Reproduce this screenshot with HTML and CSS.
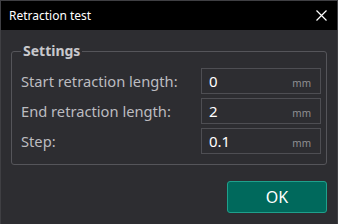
FILE: index.html
```html
<!DOCTYPE html>
<html>
<head>
<meta charset="utf-8">
<link rel="stylesheet" href="styles.css">
</head>
<body>
<div class="window">
  <div class="titlebar">
    <span class="title">Retraction test</span>
    <svg class="close" width="11" height="11" viewBox="0 0 11 11"><path d="M0.5 0.5 L10.5 10.5 M10.5 0.5 L0.5 10.5" stroke="#fff" stroke-width="1.2" fill="none"/></svg>
  </div>
  <div class="content">
    <fieldset class="group">
      <legend class="legend">Settings</legend>
      <div class="row">
        <span class="label">Start retraction length:</span>
        <div class="input"><span class="val">0</span><span class="unit">mm</span></div>
      </div>
      <div class="row">
        <span class="label">End retraction length:</span>
        <div class="input"><span class="val">2</span><span class="unit">mm</span></div>
      </div>
      <div class="row">
        <span class="label">Step:</span>
        <div class="input"><span class="val">0.1</span><span class="unit">mm</span></div>
      </div>
    </fieldset>
    <div class="footer">
      <button class="ok">OK</button>
    </div>
  </div>
</div>
</body>
</html>
```
FILE: styles.css
```css
html, body {
  margin: 0;
  padding: 0;
  background: #2d2d31;
}
.window {
  width: 338px;
  height: 224px;
  box-sizing: border-box;
  border: 1px solid #3f3f43;
  border-bottom: none;
  background: #2d2d31;
  font-family: "Noto Sans", "Open Sans", sans-serif;
  display: flex;
  flex-direction: column;
}
.titlebar {
  height: 29px;
  background: #000;
  display: flex;
  align-items: center;
  justify-content: space-between;
  padding: 0 10px 0 8px;
}
.title {
  color: #fff;
  font-size: 12px;
}
.close {
  display: block;
}
.content {
  flex: 1;
  padding: 13px 10px 0 10px;
  display: flex;
  flex-direction: column;
}
.group {
  margin: 0;
  border: 1px solid #55555a;
  border-radius: 3px;
  padding: 9px 5px 10px 9px;
  display: flex;
  flex-direction: column;
  gap: 4px;
}
.legend {
  color: #c8c8cc;
  font-weight: bold;
  font-size: 14px;
  padding: 0 2px;
  margin-left: 0;
  line-height: 16px;
}
.row {
  display: flex;
  align-items: center;
  justify-content: space-between;
  height: 26px;
}
.label {
  color: #bcbcc0;
  font-size: 14.7px;
}
.input {
  width: 120px;
  height: 26px;
  box-sizing: border-box;
  border: 1px solid #4e4e53;
  display: flex;
  align-items: center;
  justify-content: space-between;
  padding: 0 9px 0 7px;
}
.val {
  color: #ffffff;
  font-size: 15px;
}
.unit {
  color: #909094;
  font-size: 10px;
  margin-top: 4px;
}
.footer {
  display: flex;
  justify-content: flex-end;
  padding-top: 16px;
}
.ok {
  width: 100px;
  height: 32px;
  background: #00695c;
  border: 1px solid #1fa08c;
  border-radius: 3px;
  color: #fff;
  font-family: "Noto Sans", "Open Sans", sans-serif;
  font-size: 16px;
  margin-right: 0;
}
```
